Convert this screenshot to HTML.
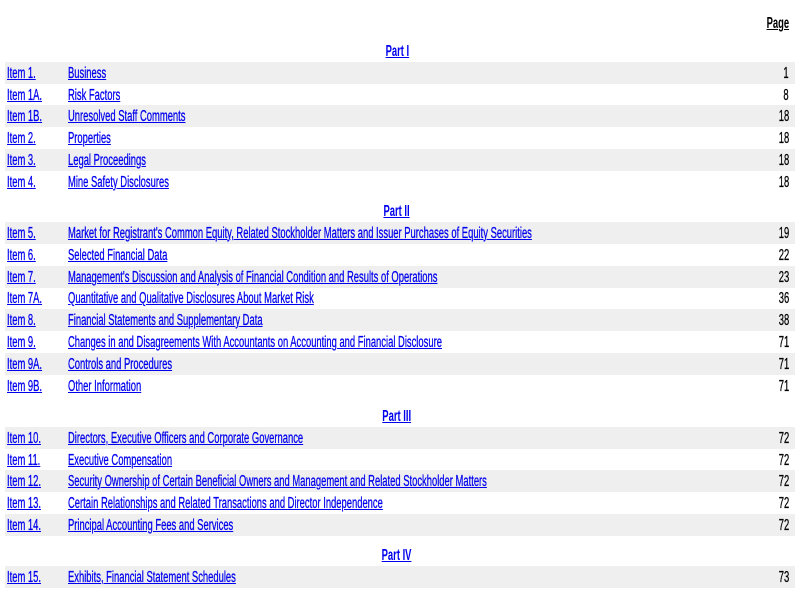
<!DOCTYPE html>
<html><head><meta charset="utf-8"><style>
body{margin:0;width:800px;height:600px;background:#fff;font-family:"Liberation Sans",Arial,sans-serif;font-size:15.5px;position:relative;overflow:hidden}
.r{position:absolute;left:5px;width:790px;height:22px}
.g{background:#efefef}
.t{position:absolute;top:3px;line-height:17px;display:inline-block;white-space:nowrap;color:#0000ee;text-decoration:underline;transform:scaleX(.607);-webkit-text-stroke:0.3px currentColor}
.a{left:2px;transform-origin:left}
.b{left:63px;transform-origin:left}
.p{right:6px;color:#000;text-decoration:none;transform-origin:right}
.h{position:absolute;left:0;width:800px;text-align:center;line-height:17px}
.h span{display:inline-block;color:#0000ee;text-decoration:underline;font-weight:bold;transform:scaleX(.607)}
</style></head><body>
<div style="position:absolute;right:11px;top:15px;line-height:17px;font-weight:bold;text-decoration:underline;transform:scaleX(.607);transform-origin:right">Page</div>
<div class="h" style="top:43px;left:-3px"><span>Part I</span></div>
<div class="r g" style="top:62px"><span class="t a">Item 1.</span><span class="t b">Business</span><span class="t p">1</span></div>
<div class="r" style="top:84px"><span class="t a">Item 1A.</span><span class="t b">Risk Factors</span><span class="t p">8</span></div>
<div class="r g" style="top:105px"><span class="t a">Item 1B.</span><span class="t b">Unresolved Staff Comments</span><span class="t p">18</span></div>
<div class="r" style="top:127px"><span class="t a">Item 2.</span><span class="t b">Properties</span><span class="t p">18</span></div>
<div class="r g" style="top:149px"><span class="t a">Item 3.</span><span class="t b">Legal Proceedings</span><span class="t p">18</span></div>
<div class="r" style="top:171px"><span class="t a">Item 4.</span><span class="t b">Mine Safety Disclosures</span><span class="t p">18</span></div>
<div class="h" style="top:203px;left:-3px"><span>Part II</span></div>
<div class="r g" style="top:222px"><span class="t a">Item 5.</span><span class="t b">Market for Registrant's Common Equity, Related Stockholder Matters and Issuer Purchases of Equity Securities</span><span class="t p">19</span></div>
<div class="r" style="top:244px"><span class="t a">Item 6.</span><span class="t b">Selected Financial Data</span><span class="t p">22</span></div>
<div class="r g" style="top:266px"><span class="t a">Item 7.</span><span class="t b">Management's Discussion and Analysis of Financial Condition and Results of Operations</span><span class="t p">23</span></div>
<div class="r" style="top:287px"><span class="t a">Item 7A.</span><span class="t b">Quantitative and Qualitative Disclosures About Market Risk</span><span class="t p">36</span></div>
<div class="r g" style="top:309px"><span class="t a">Item 8.</span><span class="t b">Financial Statements and Supplementary Data</span><span class="t p">38</span></div>
<div class="r" style="top:331px"><span class="t a">Item 9.</span><span class="t b">Changes in and Disagreements With Accountants on Accounting and Financial Disclosure</span><span class="t p">71</span></div>
<div class="r g" style="top:353px"><span class="t a">Item 9A.</span><span class="t b">Controls and Procedures</span><span class="t p">71</span></div>
<div class="r" style="top:375px"><span class="t a">Item 9B.</span><span class="t b">Other Information</span><span class="t p">71</span></div>
<div class="h" style="top:408px;left:-3px"><span>Part III</span></div>
<div class="r g" style="top:427px"><span class="t a">Item 10.</span><span class="t b">Directors, Executive Officers and Corporate Governance</span><span class="t p">72</span></div>
<div class="r" style="top:449px"><span class="t a">Item 11.</span><span class="t b">Executive Compensation</span><span class="t p">72</span></div>
<div class="r g" style="top:470px"><span class="t a">Item 12.</span><span class="t b">Security Ownership of Certain Beneficial Owners and Management and Related Stockholder Matters</span><span class="t p">72</span></div>
<div class="r" style="top:492px"><span class="t a">Item 13.</span><span class="t b">Certain Relationships and Related Transactions and Director Independence</span><span class="t p">72</span></div>
<div class="r g" style="top:514px"><span class="t a">Item 14.</span><span class="t b">Principal Accounting Fees and Services</span><span class="t p">72</span></div>
<div class="h" style="top:547px;left:-3px"><span>Part IV</span></div>
<div class="r g" style="top:566px"><span class="t a">Item 15.</span><span class="t b">Exhibits, Financial Statement Schedules</span><span class="t p">73</span></div>
</body></html>
